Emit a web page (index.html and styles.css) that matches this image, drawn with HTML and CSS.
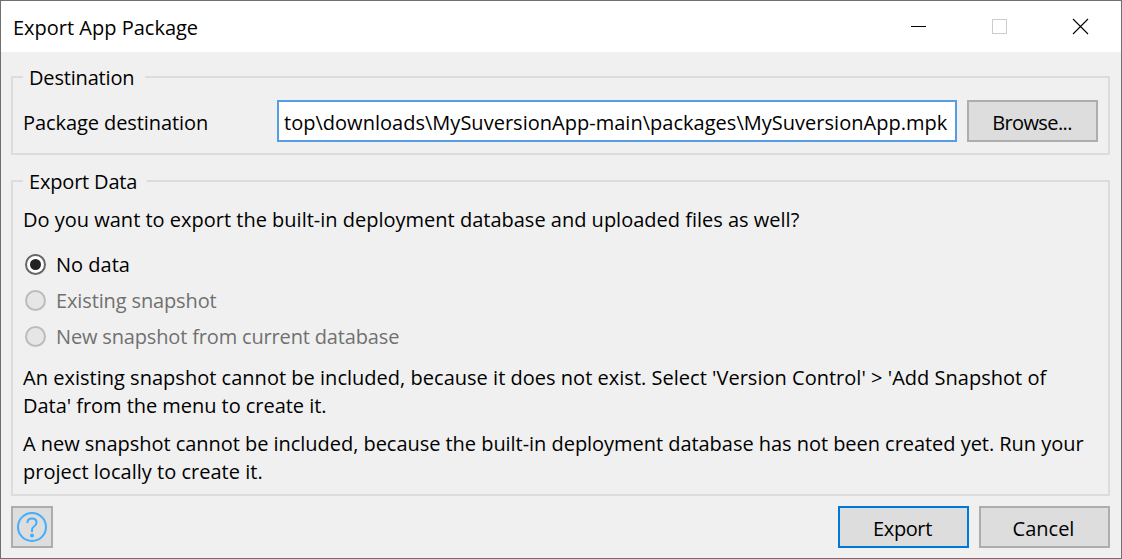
FILE: index.html
```html
<!DOCTYPE html>
<html lang="en">
<head>
<meta charset="utf-8">
<title>Export App Package</title>
<link rel="stylesheet" href="styles.css">
</head>
<body>
<div class="window">
  <header class="titlebar">
    <h1 class="title">Export App Package</h1>
    <svg class="controls" width="202" height="51" viewBox="0 0 202 51" shape-rendering="crispEdges">
      <path d="M0 25.500h15" stroke="#000"/>
      <rect x="81.500" y="18.500" width="14" height="14" fill="none" stroke="#ccc"/>
      <path d="M162 18l15 15M177 18l-15 15" stroke="#000" stroke-width="1.100" shape-rendering="auto"/>
    </svg>
  </header>
  <main class="content">
    <fieldset class="group destination">
      <legend class="legend legend-destination"><span class="legend-text">Destination</span></legend>
      <div class="field-row">
        <label class="field-label" for="path">Package destination</label>
        <div class="path-box" id="path">top\downloads\MySuversionApp-main\packages\MySuversionApp.mpk</div>
        <button class="button browse">Browse...</button>
      </div>
    </fieldset>
    <fieldset class="group export-data">
      <legend class="legend legend-data"><span class="legend-text">Export Data</span></legend>
      <p class="question">Do you want to export the built-in deployment database and uploaded files as well?</p>
      <div class="options">
        <label class="option"><span class="radio checked"></span><span>No data</span></label>
        <label class="option disabled"><span class="radio"></span><span class="existing">Existing snapshot</span></label>
        <label class="option disabled"><span class="radio"></span><span class="new">New snapshot from current database</span></label>
      </div>
      <p class="note"><span class="wide">An existing snapshot cannot be included, because it does not exist. Select 'Version Control' &gt; 'Add Snapshot of</span><br><span class="tight">Data' from the menu to create it.</span></p>
      <p class="note tight">A new snapshot cannot be included, because the built-in deployment database has not been created yet. Run your<br><span class="wide">project locally to create it.</span></p>
    </fieldset>
    <footer class="actions">
      <button class="button help" aria-label="Help">
        <svg width="32" height="32" viewBox="0 0 32 32" fill="none" stroke="#42aef9" stroke-width="2">
          <circle cx="16" cy="16" r="14"/>
          <path d="M11.500 12V11.500Q11.500 7.500 16 7.500T20.500 11.500Q20.500 14 18 15.500Q16 16.700 16 18.500V21"/>
          <circle cx="16" cy="24.500" r="2" fill="#42aef9" stroke="none"/>
        </svg>
      </button>
      <button class="button primary">Export</button>
      <button class="button cancel">Cancel</button>
    </footer>
  </main>
</div>
</body>
</html>
```
FILE: styles.css
```css
* { box-sizing: border-box; }
body {
  margin: 0;
  font: 20px/28px "Open Sans", "Noto Sans", sans-serif;
  color: #000;
}
.window {
  width: 1122px;
  height: 559px;
  border: 1px solid #707070;
  background: #f0f0f0;
  overflow: hidden;
}
.titlebar {
  display: flex;
  align-items: center;
  justify-content: space-between;
  height: 51px;
  padding-left: 12px;
  background: #fff;
}
.title { margin: 2px 0 0; font-size: inherit; font-weight: 400; }
.controls { flex: none; margin-right: 8px; }
.content { padding: 11px 11px 0 10px; }
.group {
  min-width: 0;
  margin: 0;
  padding: 0 10px;
  border: 2px solid #dcdcdc;
  white-space: nowrap;
}
.legend { height: 28px; padding: 0 0 0 6px; letter-spacing: -0.18px; }
.legend-text { display: block; padding-top: 1px; }
.legend-destination { width: 122px; }
.legend-data { width: 124px; }
.destination { height: 92px; }
.export-data { height: 329px; margin-top: 12px; }
.field-row { display: flex; margin-top: 9px; }
.field-label { width: 254px; padding-top: 2px; line-height: 42px; letter-spacing: -0.08px; }
.path-box {
  width: 680px;
  height: 42px;
  margin-right: 10px;
  padding: 2px 0 0 5px;
  border: 2px solid #569de5;
  background: #fff;
  line-height: 38px;
  letter-spacing: 0.02px;
}
.button {
  display: flex;
  align-items: center;
  justify-content: center;
  width: 131px;
  height: 42px;
  padding: 4px 0 0;
  border: 2px solid #adadad;
  background: #ddd;
  color: #000;
  font: inherit;
}
.browse { padding-right: 1px; letter-spacing: -0.6px; }
.primary { border-color: #0078d7; padding-right: 2px; letter-spacing: -0.4px; }
.cancel { padding-right: 2px; }
.help { width: 42px; margin-right: auto; padding: 0; }
.question { margin: 11px 0 12px; }
.option { display: flex; align-items: center; height: 36px; padding-top: 1px; }
.radio {
  display: grid;
  place-items: center;
  width: 21px;
  height: 21px;
  margin: 0 10px 0 2px;
  border: 2px solid #bcbcbc;
  border-radius: 50%;
  background: #e6e6e6;
}
.checked { border-color: #666; background: #fff; }
.checked::after {
  content: "";
  width: 11px;
  height: 11px;
  border-radius: 50%;
  background: #222;
}
.disabled { color: #707070; }
.existing { letter-spacing: -0.13px; }
.new { letter-spacing: -0.16px; }
.note { margin: 10px 0 0; }
.tight { letter-spacing: -0.04px; }
.wide { letter-spacing: 0.02px; }
.actions { display: flex; gap: 10px; margin-top: 10px; }
```
